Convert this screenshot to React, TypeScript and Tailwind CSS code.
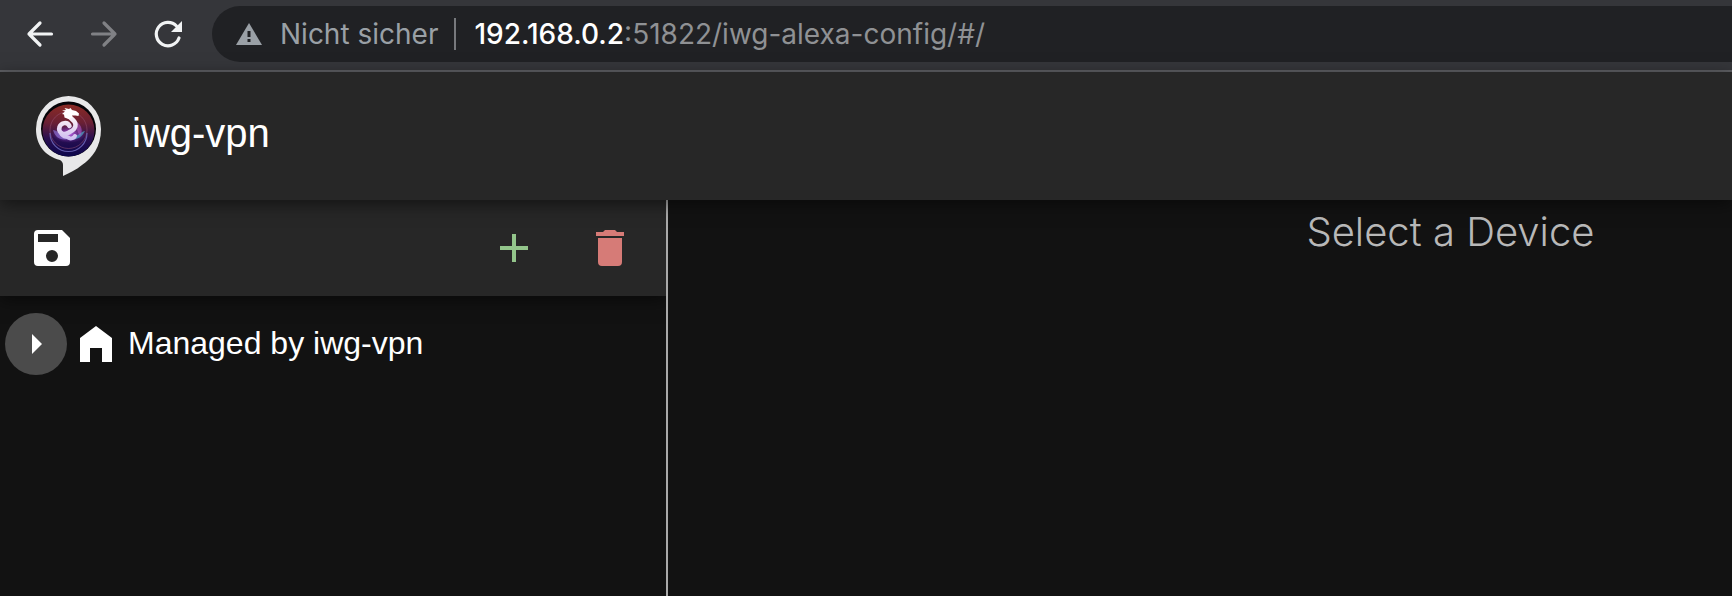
import type { ReactNode } from "react";

function Icon({ path, className }: { path: string; className: string }) {
  return (
    <svg viewBox="0 0 24 24" className={className} fill="currentColor" aria-hidden="true">
      <path d={path} />
    </svg>
  );
}

const icons = {
  save: "M15 9H5V5h10M12 19a3 3 0 1 1 0-6 3 3 0 0 1 0 6M17 3H5a2 2 0 0 0-2 2v14a2 2 0 0 0 2 2h14a2 2 0 0 0 2-2V7z",
  add: "M19 13h-6v6h-2v-6H5v-2h6V5h2v6h6z",
  remove: "M19 4h-3.5l-1-1h-5l-1 1H5v2h14M6 19a2 2 0 0 0 2 2h8a2 2 0 0 0 2-2V7H6z",
  home: "M4 9v12h5v-7h6v7h5V9l-8-6z",
  caret: "M10 17l5-5-5-5z",
};

function Logo() {
  return (
    <svg viewBox="0 0 66 80" className="h-20 w-[66px]" aria-hidden="true">
      <defs>
        <linearGradient id="disc" x1="0" y1="0" x2="0" y2="1">
          <stop offset="0" stopColor="#8a2a24" />
          <stop offset="0.35" stopColor="#6a2034" />
          <stop offset="0.65" stopColor="#2a0f50" />
          <stop offset="1" stopColor="#0b064c" />
        </linearGradient>
        <linearGradient id="dragon" gradientUnits="userSpaceOnUse" x1="0" y1="14" x2="0" y2="44">
          <stop offset="0" stopColor="#ffffff" />
          <stop offset="0.4" stopColor="#f3e8f5" />
          <stop offset="1" stopColor="#cdbcf0" />
        </linearGradient>
        <radialGradient id="glow">
          <stop offset="0" stopColor="#d277ff" stopOpacity="0.9" />
          <stop offset="0.5" stopColor="#9646c8" stopOpacity="0.55" />
          <stop offset="1" stopColor="#6a32a0" stopOpacity="0" />
        </radialGradient>
      </defs>
      <path
        fill="#e8e8e9"
        d="M32.500 0a32.500 33 0 0 1 32.500 33c0 18-9 29-19 36-6 5-13 8-19 11V69c0-2-1-4-3-5C9 60 0 49 0 33A32.500 33 0 0 1 32.500 0z"
      />
      <circle cx="32.500" cy="33" r="27.500" fill="#050308" />
      <circle cx="32.500" cy="34.500" r="26" fill="url(#disc)" />
      <circle cx="32.500" cy="34" r="18.500" fill="none" stroke="#9a5375" strokeOpacity="0.5" strokeWidth="1" />
      <path d="M14 37a18.500 18.500 0 0 0 37 0" fill="none" stroke="#7470c4" strokeOpacity="0.8" strokeWidth="1.200" />
      <ellipse cx="33" cy="38" rx="17" ry="9" fill="url(#glow)" />
      <path d="M17 34c6 1 9 6 15 9-8 2-13-2-15-9z" fill="#8a6fd0" fillOpacity="0.7" />
      <path d="M49 35c-3 6-7 8-13 9 4-3 8-8 13-9z" fill="#4cb3ce" fillOpacity="0.65" />
      <path d="M41 26c5 4 6 9 3 14-3-4-4-9-3-14z" fill="#b35ccb" fillOpacity="0.6" />
      <g fill="none" stroke="url(#dragon)" strokeLinecap="round">
        <path d="M32 18c1 5 7 5 7.500 10.500C40 34 35 35 32 37c-5 3-10-1-8.500-6 1.500-4.500 8-5.500 10-1" strokeWidth="4.500" />
        <path d="M25 37c2 5 6 3 8 5 2 1 5 0 6-2" strokeWidth="4" />
      </g>
      <path
        fill="#fff"
        d="M26 18l3-2.500-3-1 4-.5-1.500-2 4.500 1 1.500-1 1.500 2 4 1 3 2.500-.5 2.500-3-.5-3.500 0 .5 2-4 1.500-4-1.500-.5-3z"
      />
    </svg>
  );
}

function IconButton({ label, path, tone }: { label: string; path: string; tone: string }) {
  return (
    <button type="button" aria-label={label} className={"rounded-full p-6 " + tone}>
      <Icon path={path} className="size-12" />
    </button>
  );
}

function NavButton({ label, tone, children }: { label: string; tone: string; children: ReactNode }) {
  return (
    <button type="button" aria-label={label} className={"grid size-8 place-items-center " + tone}>
      <svg
        viewBox="0 0 32 32"
        className="size-8"
        fill="none"
        stroke="currentColor"
        strokeWidth="3.200"
        strokeLinecap="round"
        strokeLinejoin="round"
        aria-hidden="true"
      >
        {children}
      </svg>
    </button>
  );
}

function BrowserBar() {
  return (
    <div className="flex items-center border-b-2 border-[#5f6064] bg-[#35363a] pt-1.5 pb-2">
      <nav className="flex shrink-0 gap-8 pr-7 pl-6" aria-label="Browser">
        <NavButton label="Back" tone="text-[#f1f3f4]">
          <path d="M27.500 16H5M16 5L5 16l11 11" />
        </NavButton>
        <NavButton label="Forward" tone="text-[#808185]">
          <path d="M4.500 16H27M16 5l11 11-11 11" />
        </NavButton>
        <NavButton label="Reload" tone="text-[#f1f3f4]">
          <path d="M27 20A11.700 11.700 0 1 1 24.500 8" />
          <path d="M30 3v11H19z" fill="currentColor" stroke="none" />
        </NavButton>
      </nav>
      <div className="flex h-14 min-w-0 grow items-center rounded-l-full bg-[#202124] pl-6 font-['Inter',sans-serif] text-[28px] whitespace-nowrap">
        <svg viewBox="0 0 26 22" className="h-[22px] w-[26px] shrink-0" aria-hidden="true">
          <path d="M13 0l13 22H0z" fill="#9aa0a6" />
          <path d="M11.500 8h3v6h-3zM11.500 16h3v3h-3z" fill="#202124" />
        </svg>
        <span className="pl-[18px] text-[#9aa0a6]">Nicht sicher</span>
        <span className="ml-4 h-8 w-0.5 shrink-0 bg-[#77797d]" />
        <span className="pl-[18px] text-[#8f9194]">
          <span className="font-medium text-white">192.168.0.2</span>:51822/iwg-alexa-config/#/
        </span>
      </div>
    </div>
  );
}

export default function App() {
  return (
    <div className="flex min-h-screen flex-col overflow-hidden bg-[#121212] font-['Liberation_Sans',Arial,sans-serif] text-white">
      <BrowserBar />
      <header className="relative z-10 flex h-32 items-center gap-[30px] bg-[#272727] px-9 shadow-[0_4px_16px_rgba(0,0,0,0.5)]">
        <Logo />
        <h1 className="pb-1.5 text-[40px] leading-12">iwg-vpn</h1>
      </header>
      <div className="flex grow">
        <aside className="w-[668px] shrink-0 overflow-hidden border-r-2 border-[#a9a9a9]">
          <div className="flex bg-[#272727] pr-2 pl-1 shadow-[0_4px_16px_rgba(0,0,0,0.5)]">
            <IconButton label="Save" path={icons.save} tone="mr-auto text-white" />
            <IconButton label="Add" path={icons.add} tone="text-[#93c58b]" />
            <IconButton label="Delete" path={icons.remove} tone="text-[#d67b77]" />
          </div>
          <ul className="py-4">
            <li className="flex items-center pl-1">
              <button type="button" aria-label="Expand" className="grid size-16 place-items-center">
                <span className="grid size-[62px] place-items-center rounded-full bg-[#4b4b4b]">
                  <Icon path={icons.caret} className="size-12" />
                </span>
              </button>
              <Icon path={icons.home} className="ml-1 size-12" />
              <span className="pb-0.5 pl-2 text-[32px] leading-10">Managed by iwg-vpn</span>
            </li>
          </ul>
        </aside>
        <main className="min-w-0 grow pt-2">
          <h2 className="pl-[60%] font-['Inter',sans-serif] text-[40px] leading-12 font-light whitespace-nowrap text-[#b8b8b8]">
            Select a Device
          </h2>
        </main>
      </div>
    </div>
  );
}
